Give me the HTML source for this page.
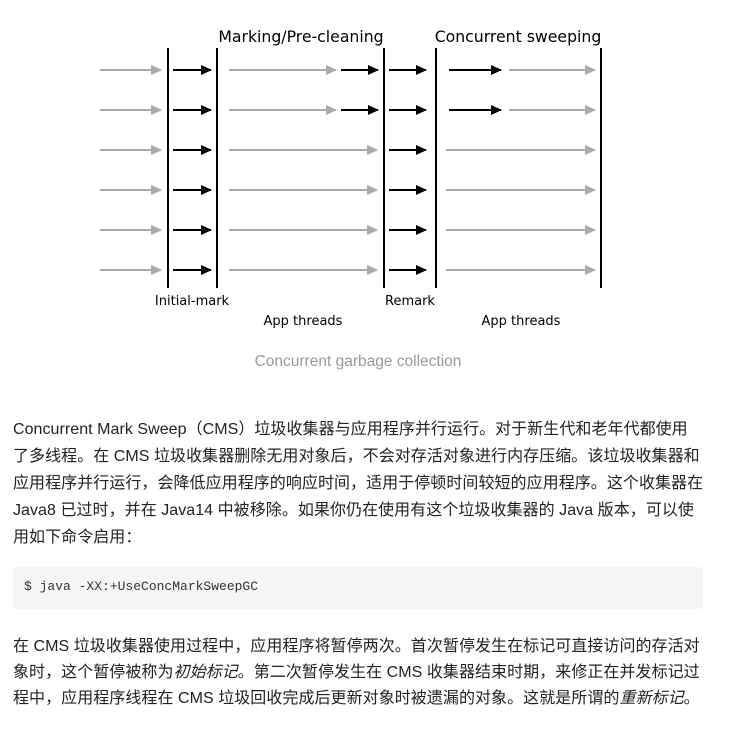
<!DOCTYPE html>
<html><head><meta charset="utf-8"><style>
body{margin:0;background:#fff;width:739px;height:742px;overflow:hidden;font-family:"Liberation Sans","Noto Sans CJK SC",sans-serif;color:#222}
svg{position:absolute;left:0;top:0}
.p{position:absolute;left:13px;font-size:16px;line-height:27px;white-space:nowrap;letter-spacing:0.05px}
.code{position:absolute;left:13px;top:567px;width:690px;height:42px;background:#f5f5f5;border-radius:4px}
.code span{position:absolute;left:11px;top:12px;font-family:"Liberation Mono","DejaVu Sans Mono",monospace;font-size:13px;color:#333}
</style></head><body>
<svg width="739" height="380" xmlns="http://www.w3.org/2000/svg">
<defs>
<marker id="g" markerWidth="11" markerHeight="10" refX="10" refY="5" orient="auto" markerUnits="userSpaceOnUse"><path d="M0,0 L11,5 L0,10z" fill="#aaa"/></marker>
<marker id="b" markerWidth="11" markerHeight="10" refX="10" refY="5" orient="auto" markerUnits="userSpaceOnUse"><path d="M0,0 L11,5 L0,10z" fill="#000"/></marker>
</defs>
<g stroke-width="2">
<line x1="168" y1="48" x2="168" y2="288" stroke="#000"/>
<line x1="217" y1="48" x2="217" y2="288" stroke="#000"/>
<line x1="384" y1="48" x2="384" y2="288" stroke="#000"/>
<line x1="436" y1="48" x2="436" y2="288" stroke="#000"/>
<line x1="601" y1="48" x2="601" y2="288" stroke="#000"/>
<g stroke="#aaa" marker-end="url(#g)">
<line x1="100" y1="70" x2="161" y2="70"/><line x1="229" y1="70" x2="336" y2="70"/><line x1="509" y1="70" x2="595" y2="70"/>
<line x1="100" y1="110" x2="161" y2="110"/><line x1="229" y1="110" x2="336" y2="110"/><line x1="509" y1="110" x2="595" y2="110"/>
<line x1="100" y1="150" x2="161" y2="150"/><line x1="229" y1="150" x2="377" y2="150"/><line x1="446" y1="150" x2="595" y2="150"/>
<line x1="100" y1="190" x2="161" y2="190"/><line x1="229" y1="190" x2="377" y2="190"/><line x1="446" y1="190" x2="595" y2="190"/>
<line x1="100" y1="230" x2="161" y2="230"/><line x1="229" y1="230" x2="377" y2="230"/><line x1="446" y1="230" x2="595" y2="230"/>
<line x1="100" y1="270" x2="161" y2="270"/><line x1="229" y1="270" x2="377" y2="270"/><line x1="446" y1="270" x2="595" y2="270"/>
</g>
<g stroke="#000" marker-end="url(#b)">
<line x1="173" y1="70" x2="211" y2="70"/><line x1="341" y1="70" x2="378" y2="70"/><line x1="389" y1="70" x2="426" y2="70"/><line x1="449" y1="70" x2="501" y2="70"/>
<line x1="173" y1="110" x2="211" y2="110"/><line x1="341" y1="110" x2="378" y2="110"/><line x1="389" y1="110" x2="426" y2="110"/><line x1="449" y1="110" x2="501" y2="110"/>
<line x1="173" y1="150" x2="211" y2="150"/><line x1="389" y1="150" x2="426" y2="150"/>
<line x1="173" y1="190" x2="211" y2="190"/><line x1="389" y1="190" x2="426" y2="190"/>
<line x1="173" y1="230" x2="211" y2="230"/><line x1="389" y1="230" x2="426" y2="230"/>
<line x1="173" y1="270" x2="211" y2="270"/><line x1="389" y1="270" x2="426" y2="270"/>
</g></g>
<g font-family="DejaVu Sans,sans-serif" text-anchor="middle" fill="#000">
<text x="301" y="42" font-size="15.7">Marking/Pre-cleaning</text>
<text x="518" y="42" font-size="15.7">Concurrent sweeping</text>
<text x="192" y="305" font-size="13">Initial-mark</text>
<text x="410" y="305" font-size="13">Remark</text>
<text x="303" y="325" font-size="13">App threads</text>
<text x="521" y="325" font-size="13">App threads</text>
</g>
<text x="358" y="366" font-size="15.5" text-anchor="middle" fill="#999" font-family="Liberation Sans,sans-serif">Concurrent garbage collection</text>
</svg>
<div class="p" style="top:416px">Concurrent Mark Sweep（CMS）垃圾收集器与应用程序并行运行。对于新生代和老年代都使用<br>了多线程。在 CMS 垃圾收集器删除无用对象后，不会对存活对象进行内存压缩。该垃圾收集器和<br>应用程序并行运行，会降低应用程序的响应时间，适用于停顿时间较短的应用程序。这个收集器在<br>Java8 已过时，并在 Java14 中被移除。如果你仍在使用有这个垃圾收集器的 Java 版本，可以使<br>用如下命令启用：</div>
<div class="code"><span>$ java -XX:+UseConcMarkSweepGC</span></div>
<div class="p" style="top:634px;line-height:26px">在 CMS 垃圾收集器使用过程中，应用程序将暂停两次。首次暂停发生在标记可直接访问的存活对<br>象时，这个暂停被称为<i>初始标记</i>。第二次暂停发生在 CMS 收集器结束时期，来修正在并发标记过<br>程中，应用程序线程在 CMS 垃圾回收完成后更新对象时被遗漏的对象。这就是所谓的<i>重新标记</i>。</div>
</body></html>
